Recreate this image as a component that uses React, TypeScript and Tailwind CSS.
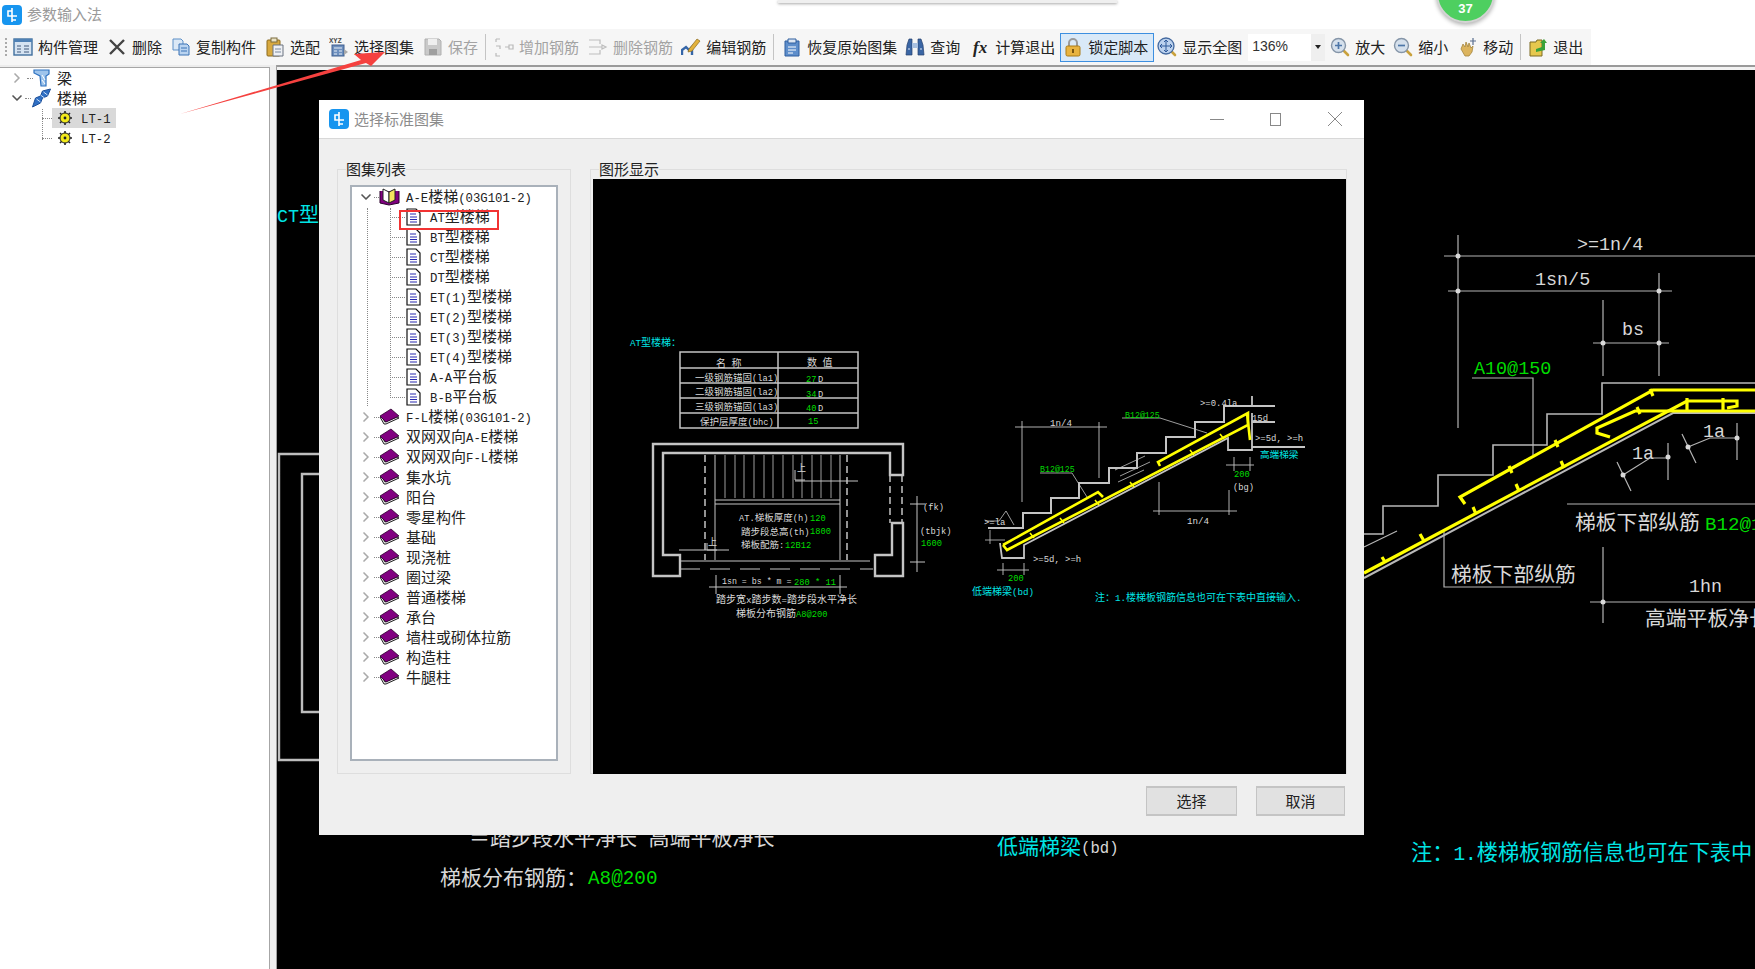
import { ChevronDown, ChevronRight } from "lucide-react";
import type { ReactNode } from "react";

const split = (s: string) => s.split(/([\x00-\x7f]+)/).filter(Boolean);
const isLatin = (s: string) => /^[\x00-\x7f]+$/.test(s);

// simsun style mix: half width latin next to full width hanzi
const Mixed = ({ text }: { text: string }) => (
  <>
    {split(text).map((part, i) =>
      isLatin(part) ? (
        <span key={i} className="font-['Liberation_Mono',monospace] text-[12.3px]">
          {part}
        </span>
      ) : (
        <span key={i}>{part}</span>
      )
    )}
  </>
);

const Cad = ({ x, y, size = 9, fill = "#d8d8d8", text }: { x: number; y: number; size?: number; fill?: string; text: string }) => (
  <text x={x} y={y} fontSize={size} fill={fill} fontFamily="'Noto Sans CJK SC',sans-serif">
    {split(text).map((part, i) =>
      isLatin(part) ? (
        <tspan key={i} fontSize={size * 0.92} fontFamily="'Liberation Mono',monospace">
          {part}
        </tspan>
      ) : (
        <tspan key={i}>{part}</tspan>
      )
    )}
  </text>
);

const Logo = () => (
  <svg viewBox="0 0 20 20" className="w-5 h-5 shrink-0">
    <rect width="20" height="20" rx="4" fill="#1795ef" />
    <path d="M10 3v14M10 6h-4v5h9M10 15h4" stroke="#fff" strokeWidth="1.6" fill="none" />
  </svg>
);

const Ico = ({ children }: { children: ReactNode }) => (
  <svg viewBox="0 0 20 20" className="w-5 h-5 shrink-0">
    {children}
  </svg>
);

const Handle = () => <path d="M13 13l5 5" stroke="#c9a13c" strokeWidth="2.6" strokeLinecap="round" />;

const icons: Record<string, ReactNode> = {
  manage: (
    <>
      <rect x="1" y="2" width="18" height="16" fill="#d5e3f2" stroke="#41709f" strokeWidth="1.4" />
      <rect x="1" y="2" width="18" height="3" fill="#4f81b5" />
      <path d="M4 9h4M4 12h4M4 15h4M11 9h5M11 12h5M11 15h5" stroke="#41587a" />
    </>
  ),
  del: <path d="M3 3l14 14M17 3L3 17" stroke="#444" strokeWidth="2.4" />,
  copy: (
    <>
      <path d="M2 2h8l2 2v9H2z" fill="#dbe8f6" stroke="#5c8fc7" />
      <path d="M8 7h8l2 2v9H8z" fill="#b9d3f0" stroke="#3a72b5" />
      <path d="M10 11h6M10 14h6" stroke="#3a72b5" />
    </>
  ),
  pick: (
    <>
      <rect x="2" y="3" width="13" height="16" rx="1" fill="#d8a93f" stroke="#8b6a1f" />
      <rect x="6" y="1" width="6" height="4" fill="#e9e2c6" stroke="#7a6a3a" />
      <path d="M8 8h10v11H8z" fill="#eef0f4" stroke="#6a7280" />
      <path d="M10 12h6M10 15h6" stroke="#7b8aa0" />
    </>
  ),
  atlas: (
    <>
      <text x="0" y="6" fontSize="6.5" fontWeight="700" fill="#444" fontFamily="'Liberation Sans',sans-serif">XYZ</text>
      <rect x="3" y="8" width="12" height="11" fill="#6d8fbe" stroke="#3f5f8f" />
      <path d="M5 11h8M5 14h3M10 14h3M5 17h3M10 17h3" stroke="#e8eef6" />
      <path d="M15 12l4 3-4 3z" fill="#aaa" />
    </>
  ),
  save: (
    <>
      <path d="M2 2h14l2 2v14H2z" fill="#c9c9c9" stroke="#b0b0b0" />
      <rect x="5" y="2" width="9" height="6" fill="#efefef" />
      <rect x="6" y="12" width="8" height="6" fill="#9f9f9f" />
    </>
  ),
  addBar: (
    <path d="M2 2h4M2 2v3M2 9h4v3M2 16v3h4M11 10h4M15 8h4v4h-4z" stroke="#b9b9b9" strokeWidth="1.2" fill="none" />
  ),
  delBar: <path d="M1 3h11v4M1 10h13M1 17h11v-4M14 8l4 2-4 2z" stroke="#bdbdbd" strokeWidth="1.2" fill="none" />,
  edit: (
    <>
      <path d="M1 18v-5l4-3 3 3 3-3v8" stroke="#3566a8" strokeWidth="2.4" fill="none" />
      <path d="M8 12L16 2l3 2-8 10-4 1z" fill="#e3b23c" stroke="#8b6a1f" strokeWidth=".7" />
    </>
  ),
  restore: (
    <>
      <path d="M3 4h14v15H3z" fill="#5e8ecb" stroke="#2f5f9f" />
      <path d="M6 2h8v4H6z" fill="#dde6f2" stroke="#2f5f9f" />
      <path d="M6 10h8M6 13h8M6 16h5" stroke="#fff" />
    </>
  ),
  find: (
    <>
      <path d="M2 8l2-6h3v16H1z" fill="#3a66a5" stroke="#26416d" strokeWidth=".7" />
      <path d="M18 8l-2-6h-3v16h6z" fill="#3a66a5" stroke="#26416d" strokeWidth=".7" />
      <rect x="7" y="6" width="6" height="5" fill="#a8c0e0" />
      <path d="M3 12h2M15 12h2" stroke="#dfe8f5" />
    </>
  ),
  fx: (
    <text x="3" y="16" fontSize="17" fontStyle="italic" fontWeight="700" fill="#222" fontFamily="'Liberation Serif',serif">fx</text>
  ),
  lock: (
    <>
      <path d="M6 9V6a4 4 0 018 0v3" stroke="#9a9a9a" strokeWidth="2" fill="none" />
      <rect x="3" y="9" width="14" height="10" rx="1.5" fill="#e8b33f" stroke="#a97b17" />
      <rect x="9" y="12" width="2" height="4" fill="#7a5610" />
    </>
  ),
  fit: (
    <>
      <Handle />
      <circle cx="9" cy="9" r="8" fill="#bcd2ee" stroke="#44699f" strokeWidth="1.3" />
      <path d="M9 3v12M3 9h12M9 3l-2 2M9 3l2 2M9 15l-2-2M9 15l2-2M3 9l2-2M3 9l2 2M15 9l-2-2M15 9l-2 2" stroke="#2f5a9a" fill="none" />
    </>
  ),
  zoomIn: (
    <>
      <Handle />
      <circle cx="8.5" cy="8.5" r="7" fill="#d5e0ec" stroke="#8595a8" strokeWidth="1.4" />
      <path d="M5 8.5h7M8.5 5v7" stroke="#4d76a8" strokeWidth="1.7" />
    </>
  ),
  zoomOut: (
    <>
      <Handle />
      <circle cx="8.5" cy="8.5" r="7" fill="#d5e0ec" stroke="#8595a8" strokeWidth="1.4" />
      <path d="M5 8.5h7" stroke="#4d76a8" strokeWidth="1.7" />
    </>
  ),
  move: (
    <>
      <path d="M3 12l2-5 2 3 1-5 2 5 1-4 2 5 2-2-1 6-3 4H7z" fill="#dcb45e" stroke="#a5853f" strokeWidth=".8" />
      <path d="M15 1v7M12 4h6" stroke="#5a6f8f" strokeWidth="1.2" />
    </>
  ),
  quit: (
    <>
      <path d="M2 5h6l1-2h5v16H2z" fill="#e6c84e" stroke="#7c6a22" />
      <path d="M8 12l6-2V6h-2l4-4 3 4h-2v7l-9 2z" fill="#3aa23a" />
    </>
  ),
};

const tools = [
  { label: "构件管理", icon: "manage", cls: "ml-[6px]" },
  { label: "删除", icon: "del", cls: "ml-[9px]" },
  { label: "复制构件", icon: "copy", cls: "ml-[9px]" },
  { label: "选配", icon: "pick", cls: "ml-[9px]" },
  { label: "选择图集", icon: "atlas", cls: "ml-[9px]" },
  { label: "保存", icon: "save", cls: "ml-[9px]", off: true, sep: true },
  { label: "增加钢筋", icon: "addBar", cls: "ml-[8px]", off: true },
  { label: "删除钢筋", icon: "delBar", cls: "ml-[9px]", off: true },
  { label: "编辑钢筋", icon: "edit", cls: "ml-[8px]", sep: true },
  { label: "恢复原始图集", icon: "restore", cls: "ml-[8px]" },
  { label: "查询", icon: "find", cls: "ml-[8px]" },
  { label: "计算退出", icon: "fx", cls: "ml-[10px]" },
];

const tools2 = [
  { label: "放大", icon: "zoomIn", cls: "ml-[5px]" },
  { label: "缩小", icon: "zoomOut", cls: "ml-[8px]" },
  { label: "移动", icon: "move", cls: "ml-[10px]", sep: true },
  { label: "退出", icon: "quit", cls: "ml-[7px]" },
];

const Tool = ({ label, icon, cls, off, sep }: { label: string; icon: string; cls: string; off?: boolean; sep?: boolean }) => (
  <>
    <div className={`flex items-center gap-[5px] ${cls} ${off ? "text-[#a3a3a3]" : "text-[#222]"}`}>
      <Ico>{icons[icon]}</Ico>
      <span>{label}</span>
    </div>
    {sep && <div className="w-px h-[26px] bg-[#c4c4c4] ml-[7px]" />}
  </>
);

const Dots = ({ cls }: { cls: string }) => <div className={`border-t border-dotted border-[#888] ${cls}`} />;

const Gear = () => (
  <svg viewBox="0 0 14 14" className="w-[14px] h-[14px] shrink-0">
    <path d="M7 0v14M0 7h14M2 2l10 10M12 2L2 12" stroke="#222" strokeWidth="1.6" />
    <circle cx="7" cy="7" r="5" fill="#f2ea1c" stroke="#222" />
    <circle cx="7" cy="7" r="1.4" fill="#222" />
  </svg>
);

const BookClosed = () => (
  <svg viewBox="0 0 21 18" className="w-[21px] h-[18px] shrink-0">
    <path d="M1 9l4 7h2l13-6-2-1L6 14 3 9z" fill="#e9e9e9" stroke="#222" />
    <path d="M1 8l11-7 8 7-13 6z" fill="#800080" stroke="#2b002b" strokeWidth=".8" />
  </svg>
);

const BookOpen = () => (
  <svg viewBox="0 0 21 18" className="w-[21px] h-[18px] shrink-0">
    <path d="M1 3v12l9 2 10-2V3" fill="#800080" stroke="#2b002b" />
    <path d="M4 1l6 3v11l-6-3z" fill="#fff" stroke="#222" />
    <path d="M16 1l-6 3v11l6-3z" fill="#f4e45e" stroke="#222" />
  </svg>
);

const DocIcon = () => (
  <svg viewBox="0 0 15 18" className="w-[15px] h-[18px] shrink-0 ml-px">
    <path d="M1 1h9l4 4v12H1z" fill="#fff" stroke="#111" strokeWidth="1.2" />
    <path d="M4 6h6M4 9h7M4 11.5h7M4 14h7" stroke="#2a2ab0" />
  </svg>
);

const Chevron = ({ open }: { open?: boolean }) =>
  open ? (
    <ChevronDown className="w-4 h-4 shrink-0 text-[#555]" strokeWidth={2.5} />
  ) : (
    <ChevronRight className="w-4 h-4 shrink-0 text-[#aaa]" strokeWidth={2.5} />
  );

const children = ["AT型楼梯", "BT型楼梯", "CT型楼梯", "DT型楼梯", "ET(1)型楼梯", "ET(2)型楼梯", "ET(3)型楼梯", "ET(4)型楼梯", "A-A平台板", "B-B平台板"];
const groups = ["F-L楼梯(03G101-2)", "双网双向A-E楼梯", "双网双向F-L楼梯", "集水坑", "阳台", "零星构件", "基础", "现浇桩", "圈过梁", "普通楼梯", "承台", "墙柱或砌体拉筋", "构造柱", "牛腿柱"];

const AtlasTree = () => (
  <div className="relative w-[208px] h-[576px] ml-[12px] mt-[15px] bg-white border-2 border-[#a9b1ba] text-[15px] text-[#222]">
    <div className="absolute left-[15px] top-[21px] h-[198px] border-l border-dotted border-[#888]" />
    <div className="absolute left-[38px] top-[21px] h-[190px] border-l border-dotted border-[#888]" />
    <div className="absolute left-[47px] top-[23px] w-[100px] h-5 border-2 border-[#f23333]" />
    <div className="flex items-center h-5 pl-[6px]">
      <Chevron open />
      <Dots cls="w-[5px]" />
      <BookOpen />
      <span className="ml-[6px]"><Mixed text="A-E楼梯(03G101-2)" /></span>
    </div>
    {children.map((c) => (
      <div key={c} className="flex items-center h-5 pl-[38px]">
        <Dots cls="w-[15px]" />
        <DocIcon />
        <span className="ml-[9px]"><Mixed text={c} /></span>
      </div>
    ))}
    {groups.map((g) => (
      <div key={g} className="flex items-center h-5 pl-[6px]">
        <Chevron />
        <Dots cls="w-[5px]" />
        <BookClosed />
        <span className="ml-[6px]"><Mixed text={g} /></span>
      </div>
    ))}
  </div>
);

const PreviewDrawing = () => {
  const treads = [725, 735, 744, 754, 764, 773, 783, 793, 802, 812, 821, 831];
  return (
    <svg viewBox="593 179 753 595" className="w-full h-full" fill="none">
      <g stroke="#c4c4c4">
        <path d="M680 352h178v76H680zM680 368h178M680 383h178M680 398h178M680 413h178M778 352v76" strokeWidth="1.5" />
        <path d="M653 576h27v-21h-17V453h227v22h13v-31H653zM903 523h-11v32h-17v21h28z" strokeWidth="2.4" />
        <path d="M890 475v48M902 475v48M705 455v105M847 455v105" strokeWidth="1.5" strokeDasharray="7 4" />
        <path d="M715 455v105M840 455v105M715 500h125M715 504h125M680 561h190" />
        {treads.map((x) => (
          <path key={x} d={`M${x} 455v43`} strokeWidth=".8" />
        ))}
        <path d="M680 569h193" strokeDasharray="20 10" />
        <path d="M795 481h63M795 470v10h10M679 550h50M707 543v7h10M917 496v76M910 504h15M910 562h15M709 587h138M716 575v19M840 575v19" />
      </g>
      <Cad x={630} y={346} size={10} fill="#00e5e5" text="AT型楼梯：" />
      <Cad x={716} y={367} size={10} text="名 称" />
      <Cad x={807} y={366} size={10} text="数 值" />
      <Cad x={695} y={381} size={9.5} text="一级钢筋锚固(la1)" />
      <Cad x={695} y={395} size={9.5} text="二级钢筋锚固(la2)" />
      <Cad x={695} y={410} size={9.5} text="三级钢筋锚固(la3)" />
      <Cad x={700} y={425} size={9.5} text="保护层厚度(bhc)" />
      <Cad x={806} y={382} size={9.5} fill="#00dd00" text="27" />
      <Cad x={818} y={382} size={9.5} text="D" />
      <Cad x={806} y={397} size={9.5} fill="#00dd00" text="34" />
      <Cad x={818} y={397} size={9.5} text="D" />
      <Cad x={806} y={411} size={9.5} fill="#00dd00" text="40" />
      <Cad x={818} y={411} size={9.5} text="D" />
      <Cad x={808} y={424} size={9.5} fill="#00dd00" text="15" />
      <Cad x={797} y={471} size={9} text="上" />
      <Cad x={708} y={545} size={9} text="上" />
      <Cad x={923} y={510} size={9.5} text="(fk)" />
      <Cad x={920} y={534} size={9.5} text="(tbjk)" />
      <Cad x={921} y={546} size={9.5} fill="#00dd00" text="1600" />
      <Cad x={739} y={521} size={9.5} text="AT.梯板厚度(h)" />
      <Cad x={810} y={521} size={9.5} fill="#00dd00" text="120" />
      <Cad x={741} y={535} size={9.5} text="踏步段总高(th)" />
      <Cad x={810} y={534} size={9.5} fill="#00dd00" text="1800" />
      <Cad x={741} y={548} size={9.5} text="梯板配筋:" />
      <Cad x={785} y={548} size={9.5} fill="#00dd00" text="12B12" />
      <Cad x={722} y={584} size={9} text="1sn = bs * m =" />
      <Cad x={794} y={585} size={9.5} fill="#00dd00" text="280 * 11" />
      <Cad x={716} y={603} size={10} text="踏步宽x踏步数=踏步段水平净长" />
      <Cad x={736} y={617} size={10} text="梯板分布钢筋" />
      <Cad x={796} y={617} size={9.5} fill="#00dd00" text="A8@200" />

      <g stroke="#c4c4c4">
        <path d="M988 528h35v-15h28v-15h28v-15h30v-15h28v-15h29v-16h29v-15h29v-16h51" strokeWidth="2" />
        <path d="M1000 543l2 15h22v-13l204-107v12h24v-37M1252 447h53M1252 422h23M1252 406v-10" strokeWidth="1.8" />
        <path d="M1015 427h92M1022 421v81M1099 422v56M1153 511h84M1159 482v33M1229 490v25M1226 465h28M1234 457v14M1250 457v14M997 570h32M1003 563v12M1024 563v12" strokeWidth=".9" />
        <path d="M1122 418h38l47 15M1040 473h32l15 24M1115 470l30-14M1120 476l30-14M1118 482l26-12M985 521h14l7-10 8 14M985 540h20M990 530v14" strokeWidth=".8" />
      </g>
      <g stroke="#ffff00" strokeWidth="2.6">
        <path d="M1003 545l4 5 241-125v-12l-90 49 2 4" />
        <path d="M1003 545l95-53 5 5M1247 413l3 27" />
        <path d="M1030 533l4 5M1060 518l4 5M1095 500l4 5M1130 482l4 5M1190 450l4 5M1220 434l4 5" strokeWidth="1.5" />
      </g>
      <Cad x={1125} y={418} fill="#00dd00" text="B12@125" />
      <Cad x={1040} y={472} fill="#00dd00" text="B12@125" />
      <Cad x={1050} y={426} size={10} text="1n/4" />
      <Cad x={1187} y={524} size={10} text="1n/4" />
      <Cad x={1234} y={477} size={9.5} fill="#00dd00" text="200" />
      <Cad x={1233} y={490} size={9.5} text="(bg)" />
      <Cad x={1260} y={458} size={9.6} fill="#00e5e5" text="高端梯梁" />
      <Cad x={1255} y={441} size={9.7} text=">=5d, >=h" />
      <Cad x={1200} y={406} size={9.7} text=">=0.4la" />
      <Cad x={1252} y={421} size={9.7} text="15d" />
      <Cad x={984} y={525} size={9.7} text=">=la" />
      <Cad x={1033} y={562} size={9.7} text=">=5d, >=h" />
      <Cad x={1008} y={581} size={9.5} fill="#00dd00" text="200" />
      <Cad x={972} y={595} size={10} fill="#00e5e5" text="低端梯梁(bd)" />
      <Cad x={1095} y={601} size={10} fill="#00e5e5" text="注：1.楼梯板钢筋信息也可在下表中直接输入." />
    </svg>
  );
};

const BackgroundDrawing = () => (
  <svg viewBox="277 70 1478 899" className="absolute inset-0 w-full h-full" fill="none">
    <path d="M360 454H279v306h81M360 474h-58v238h58" stroke="#bdbdbd" strokeWidth="2.4" />
    <Cad x={277} y={222} size={20} fill="#00e5e5" text="CT型楼梯" />
    <g stroke="#b4b4b4" strokeWidth="1.2">
      <path d="M1444 256h311M1458 235v193M1448 291h224M1659 273v103M1593 343h76M1603 300v76" />
      <path d="M1472 378h61v77M1567 504h188M1603 547v76M1590 602h165M1444 532v55h117" />
      <path d="M1623 475l27-17h18M1668 443v37M1617 462l14 29M1688 447l22-9h27M1737 423v37M1682 434l14 29M1364 547l33-16" />
    </g>
    <path d="M1364 534h19v-28h55v-31h55v-30h54v-31h55v-31h153" stroke="#b8b8b8" strokeWidth="1.6" />
    <path d="M1364 578l309-165h82" stroke="#b8b8b8" strokeWidth="2" />
    <g stroke="#ffff00" strokeWidth="3.2">
      <path d="M1364 573l323-172h50v5l-10 2" />
      <path d="M1465 504l-5-7 193-107h102" />
      <path d="M1610 437l-13-4v-5l38-17h120" />
      <path d="M1385 562l-3-5M1424 541l-4-7M1476 514l-3-7M1519 491l-3-7M1564 468l-3-7M1512 473l-3-7M1558 447l-3-7M1640 414l-3-7M1653 396l-3-7M1687 410v-12M1723 410v-12" strokeWidth="3.2" />
    </g>
    <g fill="#d8d8d8">
      <circle cx="1458" cy="256" r="2.5" /><circle cx="1458" cy="291" r="2.5" /><circle cx="1659" cy="291" r="2.5" />
      <circle cx="1603" cy="343" r="2.5" /><circle cx="1659" cy="343" r="2.5" /><circle cx="1603" cy="602" r="2.5" />
      <circle cx="1623" cy="475" r="2.5" /><circle cx="1668" cy="457" r="2.5" /><circle cx="1688" cy="447" r="2.5" /><circle cx="1737" cy="438" r="2.5" />
    </g>
    <Cad x={1577} y={250} size={20} text=">=1n/4" />
    <Cad x={1535} y={285} size={20} text="1sn/5" />
    <Cad x={1622} y={335} size={20} text="bs" />
    <Cad x={1474} y={374} size={20} fill="#00dd00" text="A10@150" />
    <Cad x={1632} y={459} size={20} text="1a" />
    <Cad x={1703} y={437} size={20} text="1a" />
    <Cad x={1575} y={530} size={20.8} text="梯板下部纵筋" />
    <Cad x={1705} y={530} size={20.8} fill="#00dd00" text="B12@125" />
    <Cad x={1451} y={582} size={20.8} text="梯板下部纵筋" />
    <Cad x={1689} y={592} size={20} text="1hn" />
    <Cad x={1645} y={626} size={20.8} text="高端平板净长" />
    <Cad x={469} y={845} size={21} text="＝踏步段水平净长 高端平板净长" />
    <Cad x={440} y={885} size={21} text="梯板分布钢筋：" />
    <Cad x={588} y={884} size={21} fill="#00dd00" text="A8@200" />
    <Cad x={997} y={854} size={21} fill="#00e5e5" text="低端梯梁" />
    <Cad x={1081} y={853} size={17} text="(bd)" />
    <Cad x={1411} y={860} size={21.2} fill="#00e5e5" text="注：1.楼梯板钢筋信息也可在下表中" />
  </svg>
);

const GroupBox = ({ label, cls, children }: { label: string; cls: string; children: ReactNode }) => (
  <div className={`relative border border-[#dedede] ${cls}`}>
    <span className="absolute left-[8px] -top-[11px] bg-[#efefef] leading-5 text-[15px] text-[#222]">{label}</span>
    {children}
  </div>
);

const AtlasDialog = () => (
  <div className="absolute left-[42px] top-[30px] w-[1045px] h-[735px] flex flex-col bg-[#efefef]">
    <div className="h-[39px] flex items-center bg-white border-b border-[#d8d8d8] pl-[10px]">
      <Logo />
      <span className="ml-[5px] text-[15px] text-[#8c8c8c]">选择标准图集</span>
      <div className="ml-auto flex items-center pr-[22px]">
        <div className="w-[14px] h-px bg-[#888]" />
        <div className="ml-[46px] w-[11px] h-[13px] border border-[#888]" />
        <svg viewBox="0 0 14 14" className="ml-[47px] w-[14px] h-[14px]">
          <path d="M0 0l14 14M14 0L0 14" stroke="#888" />
        </svg>
      </div>
    </div>
    <div className="flex pl-[18px] pt-[30px] gap-[19px]">
      <GroupBox label="图集列表" cls="w-[234px] h-[605px]">
        <AtlasTree />
      </GroupBox>
      <GroupBox label="图形显示" cls="w-[757px] h-[605px] pl-[2px] pt-[9px]">
        <div className="w-[753px] h-[595px] bg-black">
          <PreviewDrawing />
        </div>
      </GroupBox>
    </div>
    <div className="flex justify-end gap-[19px] pr-[19px] mt-[12px] text-[15px] text-[#222]">
      <button className="w-[91px] h-[30px] bg-[#e1e1e1] border border-[#c4c4c4] border-y-2">选择</button>
      <button className="w-[89px] h-[30px] bg-[#e1e1e1] border border-[#c4c4c4] border-y-2">取消</button>
    </div>
  </div>
);

const App = () => {
  return (
    <div lang="zh-CN" className="relative w-[1755px] h-[969px] overflow-hidden flex flex-col bg-white font-['Noto_Sans_CJK_SC',sans-serif] text-[15px]">
      <div className="h-[29px] shrink-0 flex items-center pl-[2px] bg-white">
        <Logo />
        <span className="ml-[5px] text-[#9a9a9a]">参数输入法</span>
      </div>

      <div className="h-9 shrink-0 w-[1591px] flex items-center bg-[#f6f6f6] pl-[5px]">
        <div className="h-[18px] border-l-2 border-dotted border-[#aaa]" />
        {tools.map((t) => (
          <Tool key={t.label} {...t} />
        ))}
        <div className="ml-[5px] w-[94px] h-[29px] flex items-center gap-[5px] pl-[2px] bg-[#d9e9f8] border border-[#3d8fe0] text-[#222]">
          <Ico>{icons.lock}</Ico>
          <span>锁定脚本</span>
        </div>
        <Tool label="显示全图" icon="fit" cls="ml-[3px]" />
        <div className="ml-[6px] flex h-[27px] w-[77px]">
          <div className="w-[63px] bg-white pl-[4px] leading-[24px] font-['Liberation_Sans',sans-serif] text-[14px] text-[#333]">136%</div>
          <div className="w-[14px] bg-[#efefef] flex items-center justify-center">
            <div className="border-x-[3px] border-t-[4px] border-x-transparent border-t-[#222]" />
          </div>
        </div>
        {tools2.map((t) => (
          <Tool key={t.label} {...t} />
        ))}
      </div>

      <div className="flex-1 flex min-h-0 bg-[#ececec]">
        <div className="relative w-[270px] mt-[2px] bg-white border-t border-r border-[#a6a6a6] text-[#222]">
          <div className="absolute left-[42px] top-[41px] h-[31px] border-l border-dotted border-[#888]" />
          <div className="flex items-center h-5 pl-[9px]">
            <Chevron />
            <Dots cls="w-[6px] ml-[2px]" />
            <svg viewBox="0 0 18 18" className="w-[18px] h-[18px] shrink-0">
              <path d="M1 1h15v4l-3 2v10H8L7 7 1 4z" fill="#9ec4ec" stroke="#2f72c0" strokeWidth="1.2" />
              <path d="M9 6l3 5M9 11l3 4" stroke="#fff" />
            </svg>
            <span className="ml-[6px]">梁</span>
          </div>
          <div className="flex items-center h-5 pl-[9px]">
            <Chevron open />
            <Dots cls="w-[6px]" />
            <svg viewBox="0 0 20 20" className="w-[21px] h-5 shrink-0">
              <path d="M1 19l3-9 5-2 2-5 8-2-3 7-5 2-2 5z" fill="#2f6fc4" stroke="#1d4f99" />
              <path d="M5 11l4 3M9 7l4 3M12 4l4 3" stroke="#cfe2f8" />
            </svg>
            <span className="ml-[5px]">楼梯</span>
          </div>
          <div className="flex items-center h-5 pl-[42px]">
            <Dots cls="w-[10px]" />
            <div className="flex items-center w-[64px] h-5 pl-[6px] bg-[#d9d9d9]">
              <Gear />
              <span className="ml-[9px]"><Mixed text="LT-1" /></span>
            </div>
          </div>
          <div className="flex items-center h-5 pl-[42px]">
            <Dots cls="w-[10px]" />
            <div className="flex items-center w-[64px] h-5 pl-[6px]">
              <Gear />
              <span className="ml-[9px]"><Mixed text="LT-2" /></span>
            </div>
          </div>
        </div>
        <div className="w-[7px] bg-[#eeeeee] border-r border-[#a0a0a0]" />
        <div className="flex-1 flex flex-col min-w-0">
          <div className="h-[5px] shrink-0 bg-[#f2f2f2] border-t-2 border-[#9a9a9a]" />
          <div className="relative flex-1 bg-black">
            <BackgroundDrawing />
            <AtlasDialog />
          </div>
        </div>
      </div>

      {/* things lying over the window: other window's edge, badge, red note arrow */}
      <div className="absolute left-[778px] top-0 w-[339px] h-[3px] bg-[#efefef] shadow-[0_1px_3px_rgba(0,0,0,0.35)]" />
      <div className="absolute left-[1436px] -top-[36px] w-[59px] h-[59px] rounded-full bg-[#4ecf60] border-2 border-[#d4d4d4] shadow-[0_2px_4px_rgba(0,0,0,0.3)] flex items-end justify-center pb-[3px] font-['Liberation_Sans',sans-serif] text-[13px] font-bold text-white">
        37
      </div>
      <svg viewBox="0 0 1755 969" className="absolute inset-0 w-full h-full pointer-events-none">
        <path d="M180 114L361 60l-7-6 31-2-14 14-5-3z" fill="#f5413f" />
      </svg>
    </div>
  );
};

export default App;
